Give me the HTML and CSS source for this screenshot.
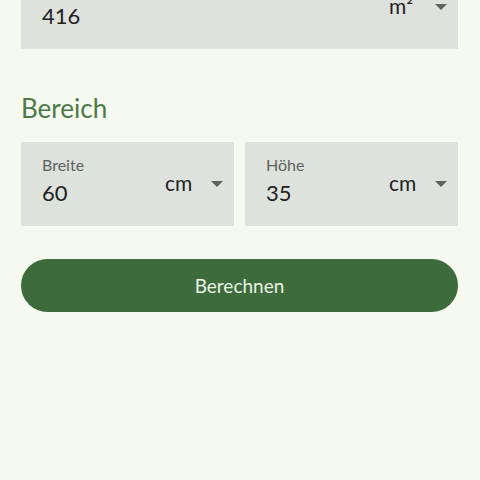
FILE: index.html
```html
<!DOCTYPE html>
<html>
<head>
    <link rel="stylesheet" href="styles.css">
  </head>
  <body>
    <div class="screen">
      <div class="field field-wide">
        <div class="field-main">
          <span class="field-label"></span>
          <span class="field-value">416</span>
        </div>
        <span class="field-unit">m²</span>
        <span class="arrow"></span>
      </div>

      <h2 class="section-title">Bereich</h2>

      <div class="field-row">
        <div class="field">
          <div class="field-main">
            <span class="field-label">Breite</span>
            <span class="field-value">60</span>
          </div>
          <span class="field-unit">cm</span>
          <span class="arrow"></span>
        </div>
        <div class="field">
          <div class="field-main">
            <span class="field-label">Höhe</span>
            <span class="field-value">35</span>
          </div>
          <span class="field-unit">cm</span>
          <span class="arrow"></span>
        </div>
      </div>

      <button class="calc-btn">Berechnen</button>
    </div>
  </body>
</html>
```

FILE: styles.css
```css
body {
    margin: 0;
    background-color: #f5f9f0;
    font-family: Lato, "Noto Sans", sans-serif;
    color: #1f211f;
  }

  .screen {
    padding: 0 22px 0 21px;
  }

  .field {
    display: flex;
    align-items: flex-start;
    height: 84px;
    box-sizing: border-box;
    padding: 13px 11px 0 21px;
    background-color: #dde2dc;
  }

  .field-wide {
    margin-top: -35px;
  }

  .field-main {
    flex: 1;
    display: flex;
    flex-direction: column;
  }

  .field-label {
    font-size: 16px;
    line-height: 20px;
    height: 20px;
    color: #5f635f;
  }

  .field-value {
    font-size: 22px;
    line-height: 30px;
    padding-top: 3px;
  }

  .field-unit {
    font-size: 21px;
    line-height: 28px;
    margin-top: 14px;
    width: 46px;
  }

  .arrow {
    margin-top: 26px;
    width: 0;
    height: 0;
    border-left: 6px solid transparent;
    border-right: 6px solid transparent;
    border-top: 6px solid #5f635f;
  }

  .section-title {
    margin: 44px 0 19px;
    font-size: 26px;
    font-weight: normal;
    line-height: 30px;
    color: #4b7a48;
  }

  .field-row {
    display: grid;
    grid-template-columns: 1fr 1fr;
    gap: 11px;
  }

  .calc-btn {
    display: block;
    width: 100%;
    height: 53px;
    margin-top: 33px;
    border: none;
    border-radius: 27px;
    background-color: #3d6b3c;
    color: #eaf2e4;
    font-family: Lato, "Noto Sans", sans-serif;
    font-size: 19px;
    cursor: pointer;
  }
```
